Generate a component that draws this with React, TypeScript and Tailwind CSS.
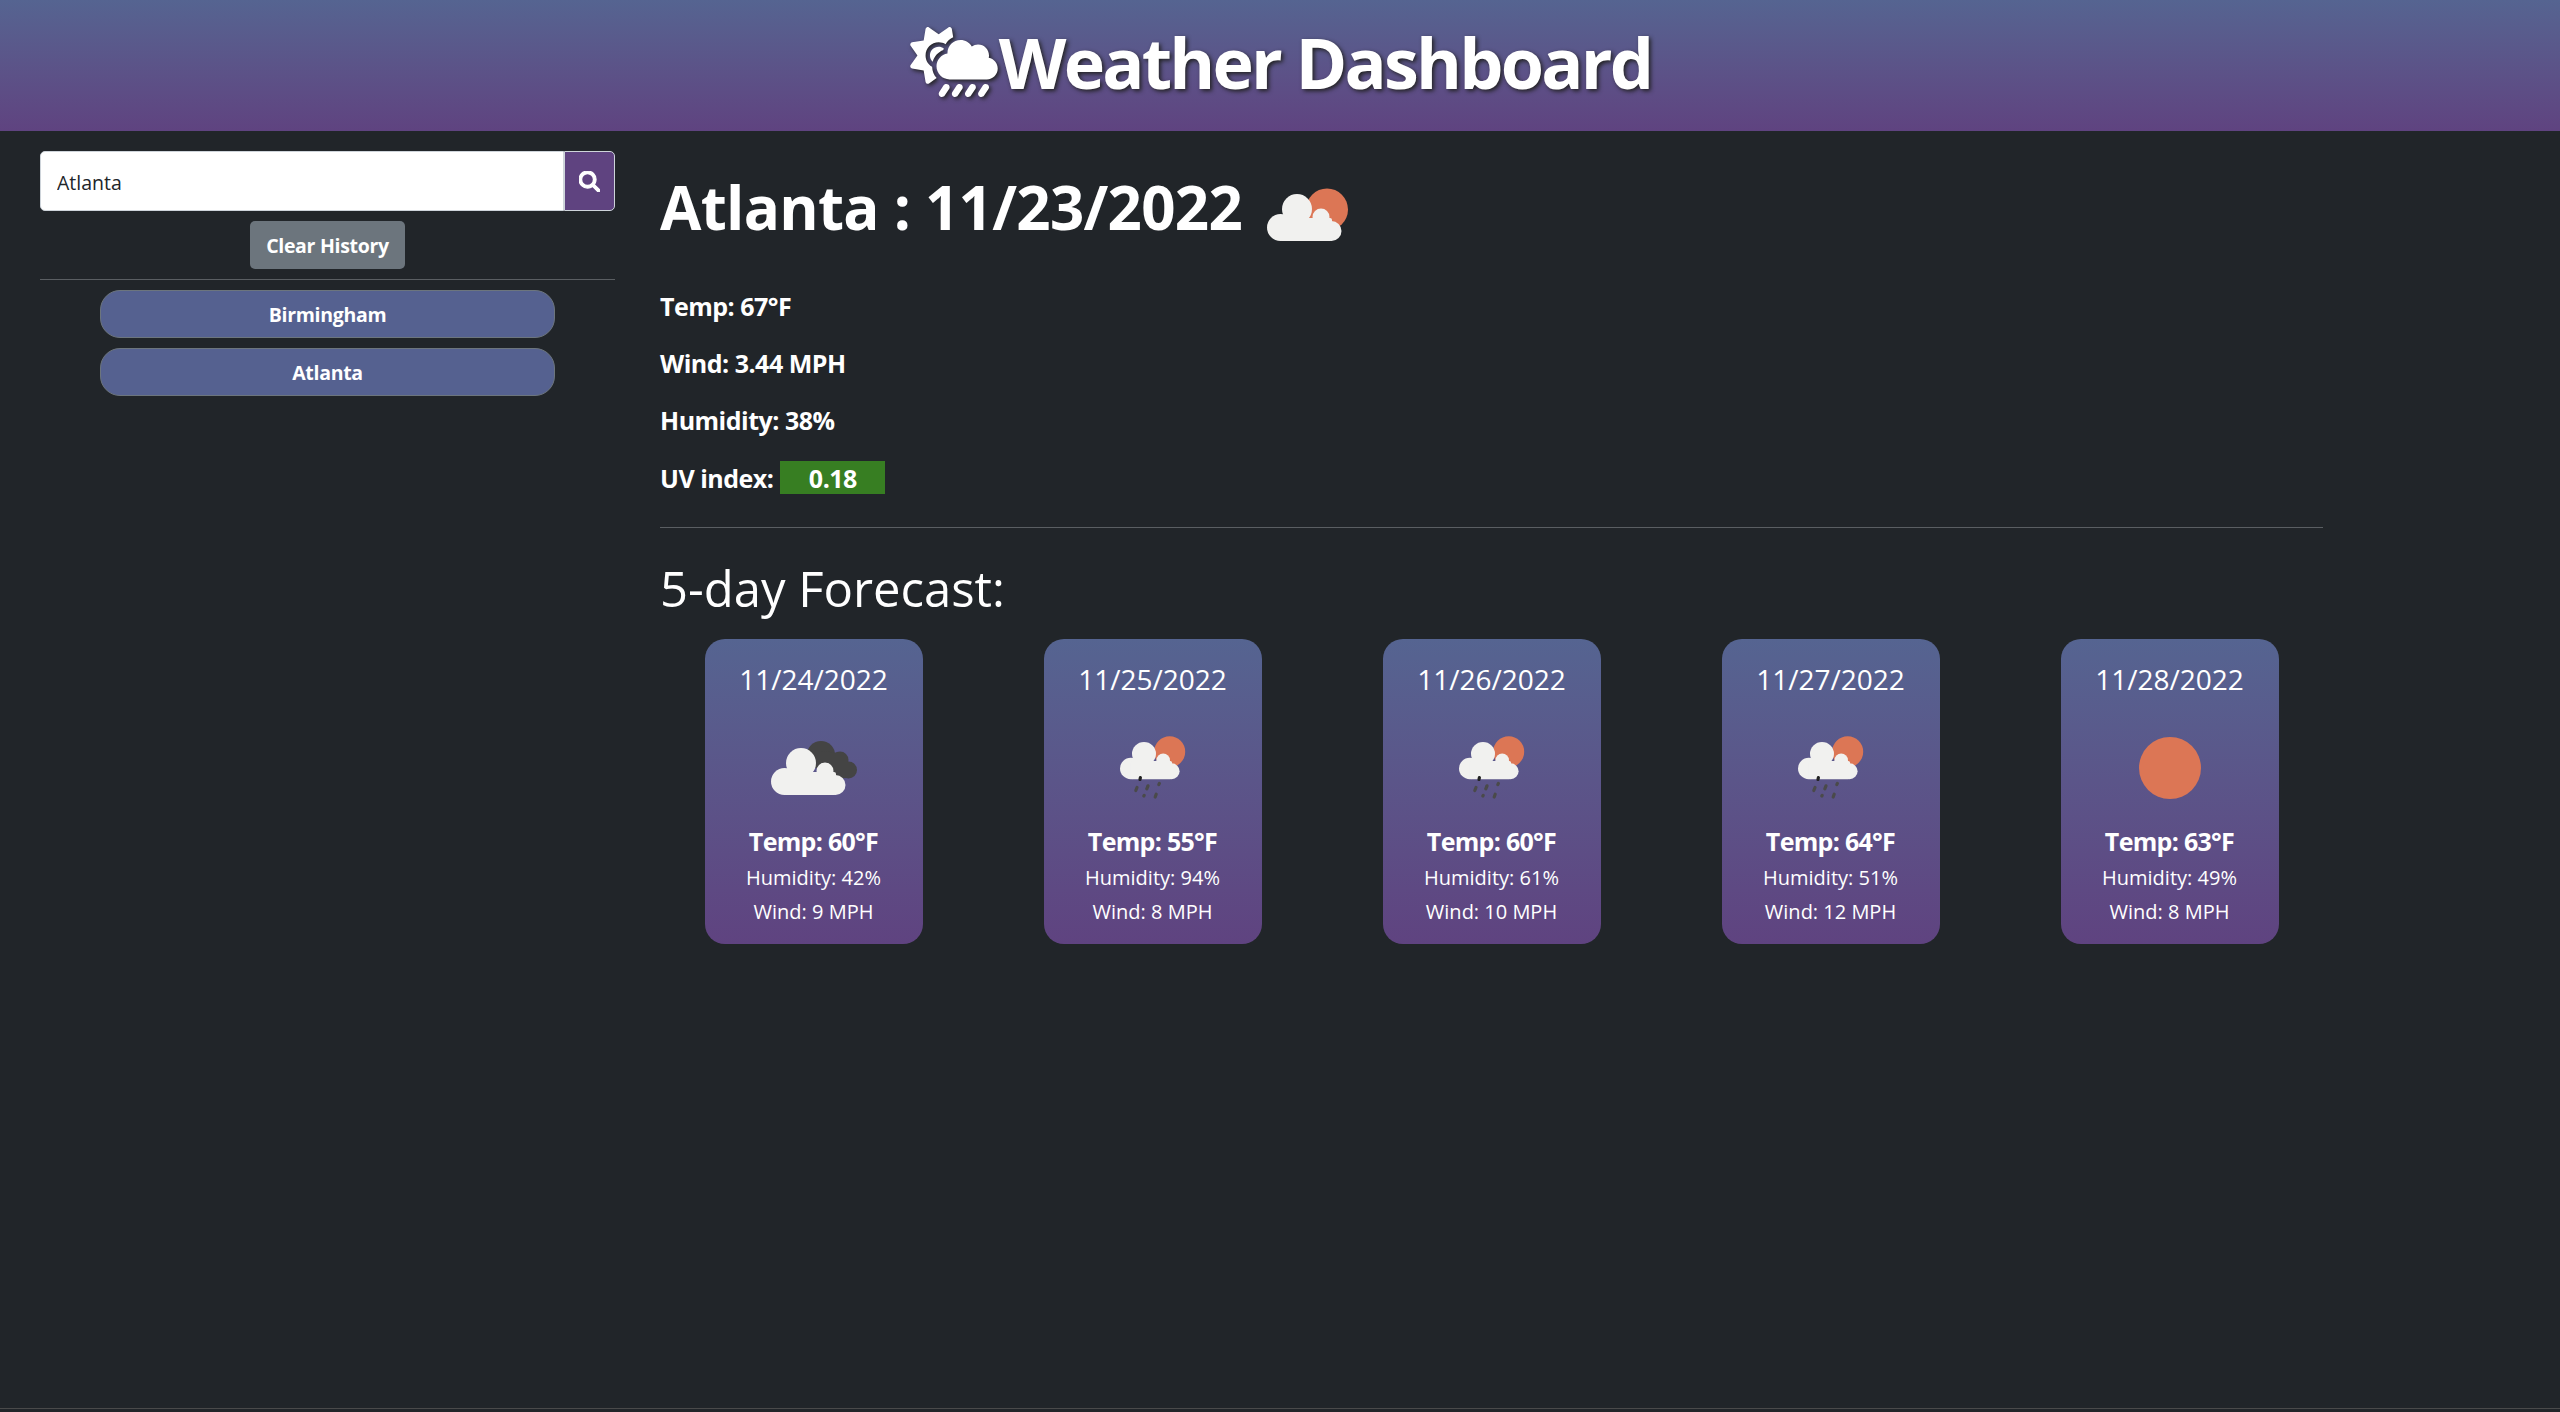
import { FaMagnifyingGlass, FaCloudSunRain } from 'react-icons/fa6';

type IconKind = 'few' | 'overcast' | 'rain' | 'clear';

interface Day {
  date: string;
  temp: number;
  humidity: number;
  wind: number;
  icon: IconKind;
}

const days: Day[] = [
  { date: '11/24/2022', temp: 60, humidity: 42, wind: 9, icon: 'overcast' },
  { date: '11/25/2022', temp: 55, humidity: 94, wind: 8, icon: 'rain' },
  { date: '11/26/2022', temp: 60, humidity: 61, wind: 10, icon: 'rain' },
  { date: '11/27/2022', temp: 64, humidity: 51, wind: 12, icon: 'rain' },
  { date: '11/28/2022', temp: 63, humidity: 49, wind: 8, icon: 'clear' },
];

// cloud drawn on a 75x47 grid, moved into place by each icon
function Cloud({ fill, transform }: { fill: string; transform?: string }) {
  return (
    <g fill={fill} transform={transform}>
      <circle cx="30" cy="15" r="15" />
      <circle cx="54" cy="23" r="8.5" />
      <circle cx="13.5" cy="33.5" r="13.5" />
      <circle cx="64.5" cy="37" r="10" />
      <rect x="13" y="24" width="52" height="23" rx="2" />
    </g>
  );
}

function WeatherIcon({ kind }: { kind: IconKind }) {
  if (kind === 'clear') {
    return (
      <svg width="62" height="62" viewBox="0 0 62 62">
        <circle cx="31" cy="31" r="31" fill="#dc7655" />
      </svg>
    );
  }
  if (kind === 'overcast') {
    return (
      <svg width="86" height="54" viewBox="0 0 86 54">
        <g fill="#444444">
          <circle cx="50" cy="14" r="14" />
          <circle cx="69" cy="19" r="8.5" />
          <circle cx="77.5" cy="29" r="8.5" />
          <polygon points="50,10 68,12 78,22 78,37 50,38" />
        </g>
        <Cloud fill="#f1f1ef" transform="translate(0 7)" />
      </svg>
    );
  }
  if (kind === 'rain') {
    return (
      <svg width="66" height="64" viewBox="0 0 66 64">
        <circle cx="49.7" cy="15.7" r="15.5" fill="#dc7655" />
        <Cloud fill="#f1f1ef" transform="translate(0 6) scale(0.8 0.79)" />
        <g stroke="#4a4a4a" strokeWidth="3.2" strokeLinecap="round">
          <line x1="20.4" y1="41.5" x2="20" y2="43.5" stroke="#222222" />
          <line x1="17" y1="51.5" x2="15.8" y2="54.5" />
          <line x1="28" y1="49.8" x2="26.8" y2="52.8" />
          <line x1="39.4" y1="47.4" x2="38.8" y2="48.6" />
          <line x1="24.2" y1="59.4" x2="23.8" y2="60" />
          <line x1="36.2" y1="58.2" x2="35.2" y2="61" />
        </g>
      </svg>
    );
  }
  return (
    <svg width="82" height="54" viewBox="0 0 82 54">
      <circle cx="60" cy="21.5" r="21" fill="#dc7655" />
      <Cloud fill="#f1f1ef" transform="translate(0 6)" />
    </svg>
  );
}

function ForecastCard({ day }: { day: Day }) {
  return (
    <div className="flex justify-center">
      <div className="flex h-[305px] w-[218px] flex-col items-center rounded-[20px] bg-gradient-to-b from-[#556491] to-[#5f4380] text-white">
        <h5 className="mt-[21px] text-[28px] leading-[38px]">{day.date}</h5>
        <div className="mt-[37px] flex h-[66px] items-center justify-center">
          <WeatherIcon kind={day.icon} />
        </div>
        <p className="mt-[24px] text-[25px] leading-[32px] font-bold tracking-[-0.7px]">Temp: {day.temp}°F</p>
        <p className="mt-[7px] text-[20px] leading-[28px]">Humidity: {day.humidity}%</p>
        <p className="mt-[6px] text-[20px] leading-[28px]">Wind: {day.wind} MPH</p>
      </div>
    </div>
  );
}

export default function App() {
  return (
    <div className="flex h-[1412px] flex-col overflow-hidden bg-[#212529] font-['Open_Sans','Noto_Sans',sans-serif] text-white">
      <header className="flex h-[131px] shrink-0 items-center justify-center bg-gradient-to-b from-[#556491] to-[#5f4380] pb-[7px]">
        <FaCloudSunRain className="h-[70px] w-[90px] drop-shadow-[2px_2px_2px_#222]" />
        <h1 className="text-[70px] leading-[84px] font-bold tracking-[-2.8px] [text-shadow:2px_2px_4px_#222]">Weather Dashboard</h1>
      </header>

      <div className="flex flex-1">
        <aside className="w-[644px] shrink-0 pt-[20px] pr-[29px] pl-[40px]">
          <div className="flex h-[60px]">
            <input
              readOnly
              value="Atlanta"
              className="min-w-0 flex-1 rounded-l-[5px] border border-[#ced4da] bg-white px-[16px] pt-[3px] text-[19.5px] text-[#212529] outline-none"
            />
            <button type="button" className="flex w-[51px] items-center justify-center rounded-r-[5px] border border-[#ced4da] bg-[#5f4380] text-white">
              <FaMagnifyingGlass className="h-[21px] w-[21px]" stroke="currentColor" strokeWidth={30} />
            </button>
          </div>
          <div className="mt-[10px] flex justify-center">
            <button type="button" className="h-[48px] w-[155px] rounded-[5px] bg-[#6c757d] pt-[2px] text-[19.5px] font-bold tracking-[-0.3px] text-white">
              Clear History
            </button>
          </div>
          <hr className="mt-[10px] border-t border-[#5a5e62]" />
          <div className="mt-[10px] flex flex-col items-center gap-[10px]">
            {['Birmingham', 'Atlanta'].map((city) => (
              <button
                key={city}
                type="button"
                className="h-[48px] w-[455px] rounded-[20px] border border-[#6c757d] bg-[#556190] pt-[1px] text-[19.5px] font-bold tracking-[-0.3px] text-white"
              >
                {city}
              </button>
            ))}
          </div>
        </aside>

        <main className="w-[1695px] shrink-0">
          <div className="px-[16px]">
            <div className="flex h-[112px] items-center gap-[25px] pt-[40px]">
              <h2 className="text-[60px] leading-[72px] font-bold tracking-[-0.7px]">Atlanta : 11/23/2022</h2>
              <div className="mt-[16px]">
                <WeatherIcon kind="few" />
              </div>
            </div>
            <div className="mt-[47px] flex flex-col gap-[25px] text-[25px] leading-[32px] font-bold tracking-[-0.5px]">
              <p>Temp: 67°F</p>
              <p>Wind: 3.44 MPH</p>
              <p>Humidity: 38%</p>
              <p className="flex items-center gap-[7px]">
                UV index:
                <span className="flex h-[33px] w-[105px] items-center justify-center bg-[#377e22]">0.18</span>
              </p>
            </div>
            <hr className="mt-[33px] border-t border-[#5a5e62]" />
            <h3 className="mt-[30px] text-[49px] leading-[60px]">5-day Forecast:</h3>
          </div>
          <div className="mt-[21px] grid grid-cols-5">
            {days.map((d) => (
              <ForecastCard key={d.date} day={d} />
            ))}
          </div>
        </main>
      </div>

      <div className="mb-[3px] h-px shrink-0 bg-[#4a4a4a]" />
    </div>
  );
}
